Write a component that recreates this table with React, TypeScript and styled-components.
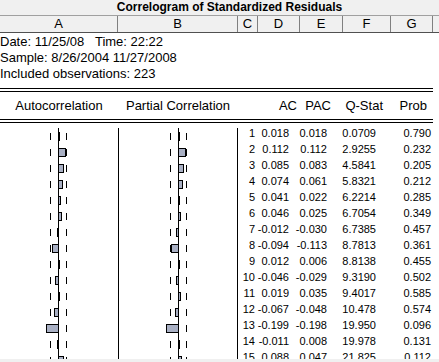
import React from 'react'
import styled, {createGlobalStyle} from 'styled-components'

const GlobalStyle = createGlobalStyle`
  html, body {
    margin: 0;
    padding: 0;
    background: #ffffff;
  }
  body {
    font-family: "Liberation Sans", Arial, sans-serif;
    color: #000000;
  }
`

const rows: [number, number, number, string, string][] = [
    [1, 0.018, 0.018, '0.0709', '0.790'],
    [2, 0.112, 0.112, '2.9255', '0.232'],
    [3, 0.085, 0.083, '4.5841', '0.205'],
    [4, 0.074, 0.061, '5.8321', '0.212'],
    [5, 0.041, 0.022, '6.2214', '0.285'],
    [6, 0.046, 0.025, '6.7054', '0.349'],
    [7, -0.012, -0.030, '6.7385', '0.457'],
    [8, -0.094, -0.113, '8.7813', '0.361'],
    [9, 0.012, 0.006, '8.8138', '0.455'],
    [10, -0.046, -0.029, '9.3190', '0.502'],
    [11, 0.019, 0.035, '9.4017', '0.585'],
    [12, -0.067, -0.048, '10.478', '0.574'],
    [13, -0.199, -0.198, '19.950', '0.096'],
    [14, -0.011, 0.008, '19.978', '0.131'],
    [15, 0.088, 0.047, '21.825', '0.112'],
]

const sheetColumns = [
    {label: 'A', width: 118},
    {label: 'B', width: 120},
    {label: 'C', width: 20},
    {label: 'D', width: 42},
    {label: 'E', width: 43},
    {label: 'F', width: 48},
    {label: 'G', width: 42},
    {label: '', width: 6},
]

const ROW_H = 16
const SCALE = 60
const BAND = 8

const Page = styled.div`
  width: 439px;
  height: 362px;
  display: flex;
  flex-direction: column;
`

const Sheet = styled.div`
  flex: 1;
  min-height: 0;
  overflow: hidden;
  display: flex;
  flex-direction: column;
`

const ScrollEdge = styled.div`
  height: 3px;
  flex: none;
  background: #f0f0f0;
`

const TitleBar = styled.div`
  height: 15px;
  flex: none;
  display: flex;
  align-items: center;
  justify-content: center;
  padding-left: 20px;
  background: #f0f0f0;
  border-bottom: 1px solid #a0a0a0;
  font-size: 12px;
  font-weight: bold;
  line-height: 15px;
`

const ColumnHeaders = styled.div`
  height: 16px;
  flex: none;
  display: flex;
  background: #f0f0f0;
  border-bottom: 1px solid #505050;
`

const ColHead = styled.div<{$w: number}>`
  width: ${({$w}) => $w}px;
  flex: none;
  box-sizing: border-box;
  border-right: 1px solid #808080;
  text-align: center;
  font-size: 13px;
  line-height: 16px;
  &:last-child {
    border-right: none;
  }
`

const Info = styled.div`
  padding-top: 1px;
  font-size: 13px;
  line-height: 16px;
  white-space: pre;
`

const DoubleRule = styled.div<{$top: number}>`
  width: 433px;
  height: 2px;
  flex: none;
  margin-top: ${({$top}) => $top}px;
  border-top: 1px solid #000000;
  border-bottom: 1px solid #000000;
`

const TableHead = styled.div`
  height: 27px;
  flex: none;
  display: grid;
  grid-template-columns: 118px 120px 59px 34px 52px 44px;
  align-items: center;
  font-size: 13px;
`

const ChartHead = styled.div`
  text-align: center;
  white-space: nowrap;
`

const StatHead = styled.div`
  text-align: right;
  white-space: nowrap;
`

const Body = styled.div`
  display: flex;
  align-items: flex-start;
  padding-top: 2px;
`

const Stats = styled.div`
  display: flex;
  flex-direction: column;
`

const StatRow = styled.div`
  display: grid;
  grid-template-columns: 17px 34px 38px 49px 55px;
  height: ${ROW_H}px;
  line-height: ${ROW_H}px;
  font-size: 11px;
`

const Num = styled.span`
  text-align: right;
  white-space: nowrap;
`

const Correlogram = ({values, center}: {values: number[], center: number}) => {
    const height = values.length * ROW_H
    return (
        <svg width={119} height={height} style={{display: 'block', flex: 'none'}} shapeRendering="crispEdges">
            <line x1={center + 0.5} y1={3} x2={center + 0.5} y2={height} stroke="#000" />
            <line x1={118.5} y1={3} x2={118.5} y2={height} stroke="#000" />
            {values.map((v, i) => {
                const top = i * ROW_H
                const w = Math.max(1, Math.round(Math.abs(v) * SCALE))
                const x = v >= 0 ? center + 0.5 : center + 0.5 - w
                return <g key={i}>
                    <line x1={center - BAND + 0.5} y1={top + 8} x2={center - BAND + 0.5} y2={top + 15} stroke="#000" />
                    <line x1={center + BAND + 0.5} y1={top + 8} x2={center + BAND + 0.5} y2={top + 15} stroke="#000" />
                    <rect x={x} y={top + 7.5} width={w} height={8} fill="#a9b0c4" stroke="#000" />
                </g>
            })}
        </svg>
    )
}

export default function App() {
    return (
        <Page>
            <GlobalStyle />
            <Sheet>
                <TitleBar>Correlogram of Standardized Residuals</TitleBar>
                <ColumnHeaders>
                    {sheetColumns.map((c, i) => <ColHead key={i} $w={c.width}>{c.label}</ColHead>)}
                </ColumnHeaders>
                <Info>
                    <div>{'Date: 11/25/08   Time: 22:22'}</div>
                    <div>Sample: 8/26/2004 11/27/2008</div>
                    <div>Included observations: 223</div>
                </Info>
                <DoubleRule $top={6} />
                <TableHead>
                    <ChartHead>Autocorrelation</ChartHead>
                    <ChartHead>Partial Correlation</ChartHead>
                    <StatHead>AC</StatHead>
                    <StatHead>PAC</StatHead>
                    <StatHead>Q-Stat</StatHead>
                    <StatHead>Prob</StatHead>
                </TableHead>
                <DoubleRule $top={0} />
                <Body>
                    <Correlogram values={rows.map(r => r[1])} center={58} />
                    <Correlogram values={rows.map(r => r[2])} center={59} />
                    <Stats>
                        {rows.map(([lag, ac, pac, q, p]) => (
                            <StatRow key={lag}>
                                <Num>{lag}</Num>
                                <Num>{ac.toFixed(3)}</Num>
                                <Num>{pac.toFixed(3)}</Num>
                                <Num>{q}</Num>
                                <Num>{p}</Num>
                            </StatRow>
                        ))}
                    </Stats>
                </Body>
            </Sheet>
            <ScrollEdge />
        </Page>
    )
}
